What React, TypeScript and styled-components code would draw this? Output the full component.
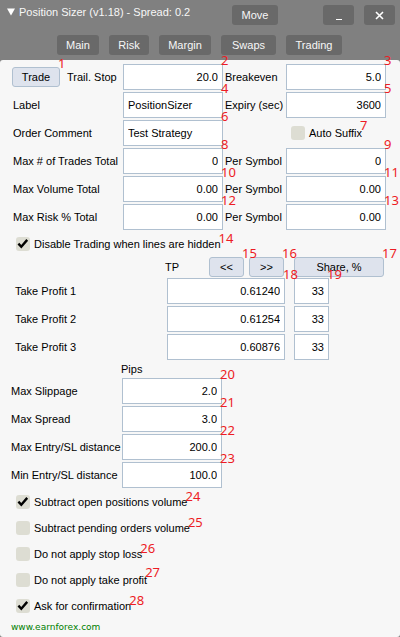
import React, { useState } from "react";
import styled, { createGlobalStyle } from "styled-components";

const GlobalStyle = createGlobalStyle`
  *, *::before, *::after { box-sizing: border-box; }
  body {
    margin: 0;
    background: #808080;
    font-family: "Liberation Sans", Arial, sans-serif;
    font-size: 11px;
    line-height: 14px;
    color: #000000;
  }
  button, input { font: inherit; color: inherit; }
`;

const Window = styled.main`
  display: flex;
  flex-direction: column;
  min-height: 100vh;
  background: #808080;
`;

const Header = styled.header`
  display: flex;
  flex-direction: column;
  gap: 10px;
  padding: 5px 5px 5px 7px;
  color: #f7f7f7;
`;

const TitleBar = styled.div`
  display: flex;
  align-items: flex-start;
`;

const Title = styled.h1`
  display: flex;
  align-items: center;
  gap: 4px;
  flex: 1;
  margin: 0;
  font-size: 11px;
  font-weight: 400;
`;

const TabBar = styled.nav`
  display: flex;
  gap: 10px;
  padding-left: 50px;
`;

const HeaderButton = styled.button<{ $width: number; $gap?: number }>`
  display: flex;
  align-items: center;
  justify-content: center;
  width: ${(p) => p.$width}px;
  height: 20px;
  margin-right: ${(p) => p.$gap ?? 0}px;
  padding: 0;
  border: 0;
  border-radius: 3px;
  background: #696969;
`;

const Panel = styled.form`
  flex: 1;
  padding: 4px 14px 2px 11px;
  border-radius: 3px;
  background: #f7f7f7;
`;

const Settings = styled.section`
  display: grid;
  grid-template-columns: 110px 1fr 63px 1fr;
  grid-auto-rows: 26px;
  row-gap: 2px;
  align-items: center;
  margin-bottom: 1px;
  padding-left: 2px;
`;

const TradeCell = styled.div`
  display: flex;
  align-items: center;
  gap: 7px;
  margin-left: -1px;
`;

const Label = styled.label<{ $indent?: number }>`
  padding-left: ${(p) => p.$indent ?? 0}px;
  white-space: nowrap;
`;

const Anchor = styled.div`
  position: relative;
  display: flex;
`;

const Marker = styled.span<{ $top?: number }>`
  position: absolute;
  z-index: 1;
  left: calc(100% - 2px);
  top: ${(p) => p.$top ?? -13}px;
  font-family: "Noto Sans", sans-serif;
  font-size: 13px;
  line-height: 18px;
  color: #ed1c24;
  pointer-events: none;
`;

const TextInput = styled.input<{ $align: "left" | "right" }>`
  width: 100%;
  min-width: 0;
  height: 26px;
  padding: 0 4px;
  border: 1px solid #b0c0d0;
  border-radius: 0;
  background: #ffffff;
  text-align: ${(p) => p.$align};
`;

const PanelButton = styled.button<{ $width: number }>`
  width: ${(p) => p.$width}px;
  height: 20px;
  padding: 0;
  border: 1px solid #b0c0d0;
  border-radius: 3px;
  background: #dee3ed;
`;

const CheckRow = styled.div`
  display: flex;
  align-items: center;
  gap: 4px;
  height: 26px;
  padding-left: 5px;
`;

const TickBox = styled.span`
  display: grid;
  width: 14px;
  height: 14px;

  > * { grid-area: 1 / 1; }

  svg { visibility: hidden; pointer-events: none; }

  input:checked + svg { visibility: visible; }
`;

const Tick = styled.input`
  appearance: none;
  width: 14px;
  height: 14px;
  margin: 0;
  border-radius: 3px;
  background: #ddddd3;
`;

const TargetsHead = styled.div`
  display: flex;
  align-items: center;
  height: 20px;
  margin: 0 2px 1px 154px;
`;

const Caption = styled.span`
  flex: 1;
`;

const StepButtons = styled.div`
  display: flex;
  gap: 5px;
  margin-right: 10px;
`;

const TargetRow = styled.div`
  display: grid;
  grid-template-columns: 152px minmax(60px, 1fr) 35px;
  align-items: center;
  margin: 0 57px 2px 4px;
`;

const PriceCell = styled.div`
  padding-right: 9px;
`;

const Limits = styled.section`
  display: grid;
  grid-template-columns: 111px minmax(60px, 100px);
  row-gap: 2px;
  align-items: center;
  margin-bottom: 1px;
`;

const PipsCaption = styled.div`
  grid-column: 2;
  margin-left: -1px;
`;

const SiteLink = styled.a`
  display: block;
  width: max-content;
  margin-top: 1px;
  font-family: "DejaVu Sans", Verdana, sans-serif;
  font-size: 9px;
  line-height: 14px;
  color: #008000;
  text-decoration: none;
`;

type FieldProps = {
  id: string;
  value: string;
  mark?: number;
  align?: "left" | "right";
  label?: string;
};

function Field({ id, value, mark, align = "right", label }: FieldProps) {
  const [text, setText] = useState(value);
  return (
    <Anchor>
      <TextInput
        id={id}
        aria-label={label}
        $align={align}
        value={text}
        onChange={(e) => setText(e.target.value)}
      />
      {mark !== undefined && <Marker>{mark}</Marker>}
    </Anchor>
  );
}

type CheckProps = {
  id: string;
  label: string;
  mark: number;
  checked?: boolean;
  markTop?: number;
};

function Check({ id, label, mark, checked = false, markTop = -8 }: CheckProps) {
  return (
    <CheckRow>
      <TickBox>
        <Tick type="checkbox" id={id} defaultChecked={checked} />
        <svg width="14" height="14" viewBox="0 0 14 14" fill="none" stroke="#000" strokeWidth="2.4">
          <path d="M2.4 6.6L5.3 9.7L11.2 2.9" />
        </svg>
      </TickBox>
      <Anchor>
        <Label htmlFor={id}>{label}</Label>
        <Marker $top={markTop}>{mark}</Marker>
      </Anchor>
    </CheckRow>
  );
}

const tabs = [
  { name: "Main", width: 42 },
  { name: "Risk", width: 40 },
  { name: "Margin", width: 52 },
  { name: "Swaps", width: 55 },
  { name: "Trading", width: 56 },
];

const totals = [
  { key: "trades", label: "Max # of Trades Total", value: "0", mark: 8 },
  { key: "volume", label: "Max Volume Total", value: "0.00", mark: 10 },
  { key: "risk", label: "Max Risk % Total", value: "0.00", mark: 12 },
];

const targets = [
  { name: "Take Profit 1", price: "0.61240", priceMark: 18, shareMark: 19 },
  { name: "Take Profit 2", price: "0.61254" },
  { name: "Take Profit 3", price: "0.60876" },
];

const limits = [
  { label: "Max Slippage", value: "2.0" },
  { label: "Max Spread", value: "3.0" },
  { label: "Max Entry/SL distance", value: "200.0" },
  { label: "Min Entry/SL distance", value: "100.0" },
];

const options = [
  { label: "Subtract open positions volume", checked: true },
  { label: "Subtract pending orders volume" },
  { label: "Do not apply stop loss" },
  { label: "Do not apply take profit", markTop: -10 },
  { label: "Ask for confirmation", checked: true },
];

export default function App() {
  return (
    <Window>
      <GlobalStyle />
      <Header>
        <TitleBar>
          <Title>
            <svg width="8" height="8" viewBox="0 0 8 8" fill="#fff" aria-hidden="true">
              <path d="M0 0.5H8L4 7.5Z" />
            </svg>
            Position Sizer (v1.18) - Spread: 0.2
          </Title>
          <HeaderButton type="button" $width={46} $gap={45}>Move</HeaderButton>
          <HeaderButton type="button" $width={31} $gap={10} aria-label="Minimize">
            <svg width="8" height="12" viewBox="0 0 8 12" aria-hidden="true">
              <path d="M1 10.5H7" stroke="#fff" strokeWidth="1" />
            </svg>
          </HeaderButton>
          <HeaderButton type="button" $width={31} aria-label="Close">
            <svg width="9" height="10" viewBox="0 0 9 10" aria-hidden="true">
              <path d="M1 2L8 9M8 2L1 9" stroke="#fff" strokeWidth="1.6" />
            </svg>
          </HeaderButton>
        </TitleBar>
        <TabBar>
          {tabs.map((t) => (
            <HeaderButton key={t.name} type="button" $width={t.width}>{t.name}</HeaderButton>
          ))}
        </TabBar>
      </Header>

      <Panel onSubmit={(e) => e.preventDefault()}>
        <Settings>
          <TradeCell>
            <Anchor>
              <PanelButton type="button" $width={48}>Trade</PanelButton>
              <Marker>1</Marker>
            </Anchor>
            <Label htmlFor="trail">Trail. Stop</Label>
          </TradeCell>
          <Field id="trail" value="20.0" mark={2} />
          <Label htmlFor="breakeven" $indent={2}>Breakeven</Label>
          <Field id="breakeven" value="5.0" mark={3} />

          <Label htmlFor="label">Label</Label>
          <Field id="label" value="PositionSizer" align="left" mark={4} />
          <Label htmlFor="expiry" $indent={2}>Expiry (sec)</Label>
          <Field id="expiry" value="3600" mark={5} />

          <Label htmlFor="comment">Order Comment</Label>
          <Field id="comment" value="Test Strategy" align="left" mark={6} />
          <span />
          <Check id="suffix" label="Auto Suffix" mark={7} markTop={-10} />

          {totals.map((t) => (
            <React.Fragment key={t.key}>
              <Label htmlFor={t.key}>{t.label}</Label>
              <Field id={t.key} value={t.value} mark={t.mark} />
              <Label htmlFor={`${t.key}-symbol`} $indent={2}>Per Symbol</Label>
              <Field id={`${t.key}-symbol`} value={t.value} mark={t.mark + 1} />
            </React.Fragment>
          ))}
        </Settings>

        <Check id="hidden-lines" label="Disable Trading when lines are hidden" mark={14} checked />

        <TargetsHead>
          <Caption>TP</Caption>
          <StepButtons>
            <Anchor>
              <PanelButton type="button" $width={35}>&lt;&lt;</PanelButton>
              <Marker>15</Marker>
            </Anchor>
            <Anchor>
              <PanelButton type="button" $width={35}>&gt;&gt;</PanelButton>
              <Marker>16</Marker>
            </Anchor>
          </StepButtons>
          <Anchor>
            <PanelButton type="button" $width={90}>Share, %</PanelButton>
            <Marker>17</Marker>
          </Anchor>
        </TargetsHead>

        {targets.map((t, i) => (
          <TargetRow key={t.name}>
            <Label htmlFor={`tp-${i}`}>{t.name}</Label>
            <PriceCell>
              <Field id={`tp-${i}`} value={t.price} mark={t.priceMark} />
            </PriceCell>
            <Field id={`share-${i}`} label={`${t.name} share, %`} value="33" mark={t.shareMark} />
          </TargetRow>
        ))}

        <Limits>
          <PipsCaption>Pips</PipsCaption>
          {limits.map((l, i) => (
            <React.Fragment key={l.label}>
              <Label htmlFor={`limit-${i}`}>{l.label}</Label>
              <Field id={`limit-${i}`} value={l.value} mark={20 + i} />
            </React.Fragment>
          ))}
        </Limits>

        {options.map((o, i) => (
          <Check
            key={o.label}
            id={`option-${i}`}
            label={o.label}
            checked={o.checked}
            mark={24 + i}
            markTop={o.markTop}
          />
        ))}

        <SiteLink href="#site">www.earnforex.com</SiteLink>
      </Panel>
    </Window>
  );
}
